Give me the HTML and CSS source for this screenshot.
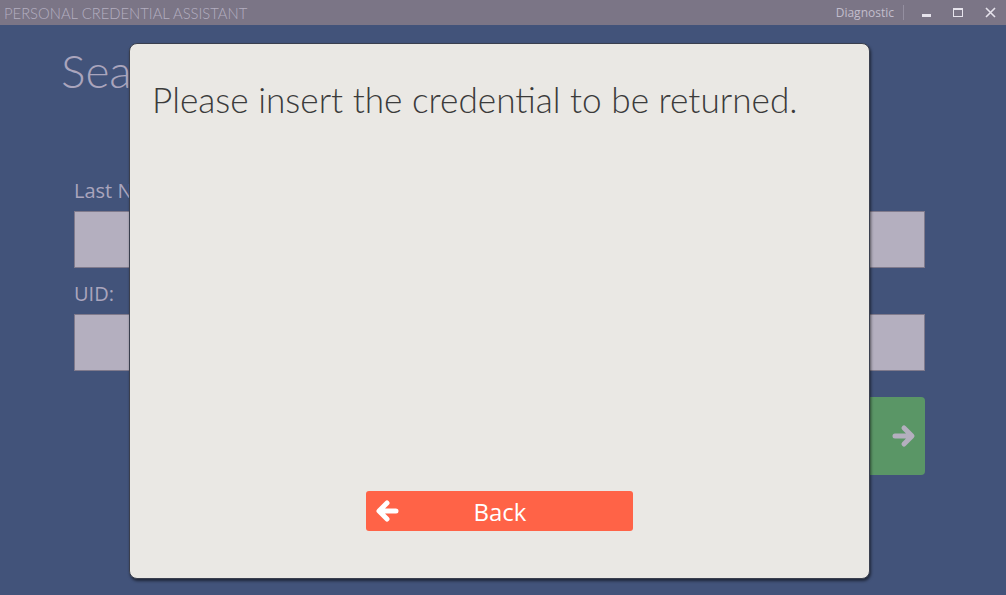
FILE: index.html
```html
<!DOCTYPE html>
<html lang="en">

<head>
    <meta charset="UTF-8">
    <meta name="viewport" content="width=device-width, initial-scale=1.0">
    <title>Personal Credential Assistant</title>
    <link rel="stylesheet" href="styles.css">
</head>

<body>
    <div class="titlebar">
        <div class="app-name">PERSONAL CREDENTIAL ASSISTANT</div>
        <div class="window-controls">
            <span class="diag">Diagnostic</span>
            <span class="sep"></span>
            <span class="ctrl"><span class="min"></span></span>
            <span class="ctrl"><span class="max"></span></span>
            <span class="ctrl">
                <svg width="11" height="11" viewBox="0 0 11 11">
                    <path d="M1 1 L10 10 M10 1 L1 10" stroke="#e6e3ec" stroke-width="1.6" />
                </svg>
            </span>
        </div>
    </div>

    <div class="main">
        <div class="page-title">Search</div>

        <div class="form">
            <div class="label">Last Name:</div>
            <div class="field"></div>
            <div class="label">UID:</div>
            <div class="field"></div>
            <div class="actions">
                <button class="go">
                    <svg width="24" height="24" viewBox="0 0 24 24">
                        <path d="M3 12 H19 M12 4 L20 12 L12 20" stroke="#b4afbf" stroke-width="5"
                            stroke-linecap="round" stroke-linejoin="round" fill="none" />
                    </svg>
                </button>
            </div>
        </div>

        <!-- Dialog -->
        <div class="dialog">
            <div class="dialog-text">Please insert the credential to be returned.</div>
            <button class="back">
                <svg class="back-icon" width="24" height="24" viewBox="0 0 24 24">
                    <path d="M21 12 H5 M12 4 L4 12 L12 20" stroke="#ffffff" stroke-width="5"
                        stroke-linecap="round" stroke-linejoin="round" fill="none" />
                </svg>
                <span>Back</span>
            </button>
        </div>
    </div>
</body>

</html>
```

FILE: styles.css
```css
html, body {
    margin: 0;
    height: 100%;
}

body {
    font-family: "Open Sans", "Noto Sans", sans-serif;
    background: #42537a;
    display: flex;
    flex-direction: column;
    overflow: hidden;
}

.titlebar {
    height: 25px;
    background: #7b7586;
    display: flex;
    align-items: center;
    justify-content: space-between;
    flex-shrink: 0;
}

.app-name {
    font-family: "Lato", sans-serif;
    font-weight: 300;
    font-size: 14.8px;
    color: #b3aec0;
    padding-left: 4px;
}

.window-controls {
    display: flex;
    align-items: center;
    height: 100%;
}

.diag {
    font-size: 12px;
    color: #c2bdcc;
    margin-right: 9px;
}

.sep {
    width: 1px;
    height: 15px;
    background: #948fa0;
    margin-right: 6px;
}

.ctrl {
    width: 32px;
    height: 25px;
    display: flex;
    align-items: center;
    justify-content: center;
}

.min {
    width: 9px;
    height: 3px;
    background: #e6e3ec;
    margin-top: 6px;
}

.max {
    width: 8px;
    height: 6px;
    border: 1px solid #e6e3ec;
    border-top-width: 2px;
}

.main {
    flex: 1;
    position: relative;
    padding: 18px 81px 0 61px;
}

.page-title {
    font-family: "Lato", sans-serif;
    font-weight: 300;
    font-size: 46px;
    color: #aaa5bd;
    line-height: 56px;
}

.form {
    margin-top: 78px;
    margin-left: 13px;
}

.label {
    font-size: 20px;
    color: #aaa5bd;
    line-height: 28px;
    margin-bottom: 6px;
}

.field {
    height: 55px;
    background: #b4afbf;
    border: 1px solid #7f7a8c;
    margin-bottom: 12px;
}

.actions {
    display: flex;
    justify-content: flex-end;
    margin-top: 26px;
}

.go {
    width: 80px;
    height: 78px;
    background: #5a9666;
    border: none;
    border-radius: 4px;
    display: flex;
    align-items: center;
    justify-content: flex-end;
    padding-right: 9px;
}

.dialog {
    position: absolute;
    left: 129px;
    top: 18px;
    width: 741px;
    height: 536px;
    background: #eae8e4;
    border: 1px solid #3a3f4e;
    border-radius: 8px;
    box-shadow: 1px 2px 3px rgba(0, 0, 0, 0.55);
    display: flex;
    flex-direction: column;
    align-items: center;
    justify-content: space-between;
    padding: 34px 0 47px;
    box-sizing: border-box;
}

.dialog-text {
    align-self: flex-start;
    margin-left: 22px;
    font-family: "Lato", sans-serif;
    font-weight: 300;
    font-size: 35.2px;
    color: #3b3b3b;
    line-height: 42px;
}

.back {
    width: 267px;
    height: 40px;
    background: #ff6347;
    border: none;
    border-radius: 3px;
    position: relative;
    display: flex;
    align-items: center;
    justify-content: center;
    padding: 0;
    margin-left: 0;
}

.back span {
    font-family: "Open Sans", sans-serif;
    font-size: 24px;
    color: #ffffff;
    margin-left: 1px;
}

.back-icon {
    position: absolute;
    left: 9px;
    top: 8px;
}
```
